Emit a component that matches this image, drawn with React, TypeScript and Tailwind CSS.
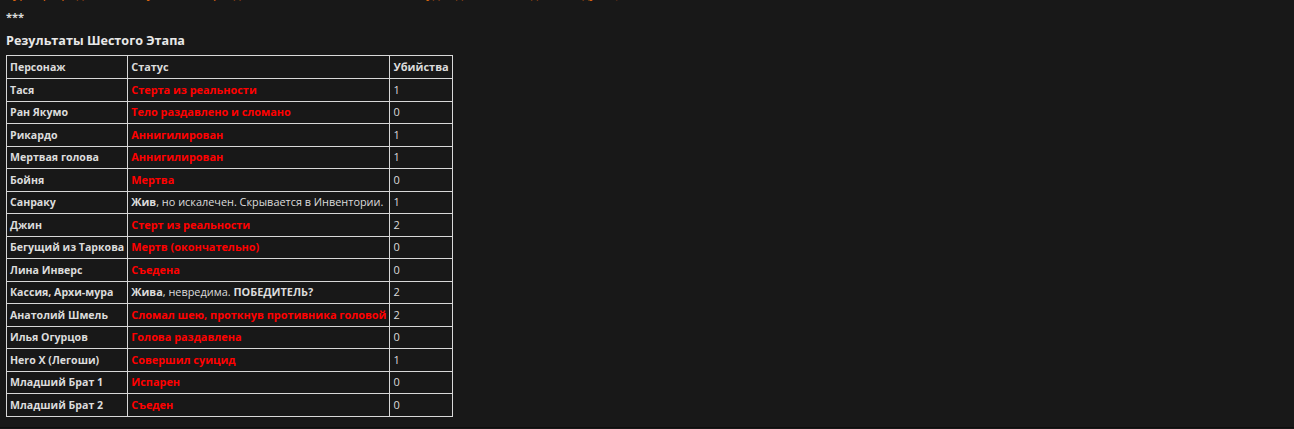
import React from "react";

type Row = { name: string; status: React.ReactNode; kills: string };

const red = (t: string) => <span className="font-bold text-[#ff0000]">{t}</span>;

const rows: Row[] = [
  { name: "Тася", status: red("Стерта из реальности"), kills: "1" },
  { name: "Ран Якумо", status: red("Тело раздавлено и сломано"), kills: "0" },
  { name: "Рикардо", status: red("Аннигилирован"), kills: "1" },
  { name: "Мертвая голова", status: red("Аннигилирован"), kills: "1" },
  { name: "Бойня", status: red("Мертва"), kills: "0" },
  {
    name: "Санраку",
    status: (
      <>
        <b>Жив</b>, но искалечен. Скрывается в Инвентории.
      </>
    ),
    kills: "1",
  },
  { name: "Джин", status: red("Стерт из реальности"), kills: "2" },
  { name: "Бегущий из Таркова", status: red("Мертв (окончательно)"), kills: "0" },
  { name: "Лина Инверс", status: red("Съедена"), kills: "0" },
  {
    name: "Кассия, Архи-мура",
    status: (
      <>
        <b>Жива</b>, невредима. <b>ПОБЕДИТЕЛЬ?</b>
      </>
    ),
    kills: "2",
  },
  { name: "Анатолий Шмель", status: red("Сломал шею, проткнув противника головой"), kills: "2" },
  { name: "Илья Огурцов", status: red("Голова раздавлена"), kills: "0" },
  { name: "Hero X (Легоши)", status: red("Совершил суицид"), kills: "1" },
  { name: "Младший Брат 1", status: red("Испарен"), kills: "0" },
  { name: "Младший Брат 2", status: red("Съеден"), kills: "0" },
];

const cell = "border border-[#d8d8d8] px-[3px] text-left";

export default function App() {
  return (
    <div
      className="w-[1294px] h-[429px] overflow-hidden bg-[#181818] text-[#dcdcdc]"
      style={{ fontFamily: '"Open Sans", "Noto Sans", sans-serif' }}
    >
      <div className="border-b border-[#0e0e0e] pb-[10px] px-[6px]">
        <p className="mt-[-14px] text-[12.5px] leading-[16px] text-[#e36a0f] whitespace-nowrap">
          Турнир продолжается, участники разделены, и никто не знает, что будет дальше — ждите следующий этап.
        </p>
        <p className="mt-[8px] text-[11px] leading-[14px] font-bold">***</p>
        <h3 className="mt-[9px] text-[12.6px] leading-[16px] font-bold text-[#e8e8e8]">
          Результаты Шестого Этапа
        </h3>
        <table className="mt-[6px] border-collapse leading-[14px]">
          <thead>
            <tr className="h-[23px]">
              <th className={`${cell} text-[10.6px] font-bold`}>Персонаж</th>
              <th className={`${cell} text-[10.9px] font-bold`}>Статус</th>
              <th className={`${cell} text-[11px] font-bold`}>Убийства</th>
            </tr>
          </thead>
          <tbody>
            {rows.map((r, i) => (
              <tr key={i} className="h-[22.5px]">
                <td className={`${cell} text-[10.6px] font-bold whitespace-nowrap`}>{r.name}</td>
                <td className={`${cell} text-[10.9px] whitespace-nowrap`}>{r.status}</td>
                <td className={`${cell} text-[11px]`}>{r.kills}</td>
              </tr>
            ))}
          </tbody>
        </table>
      </div>
    </div>
  );
}
